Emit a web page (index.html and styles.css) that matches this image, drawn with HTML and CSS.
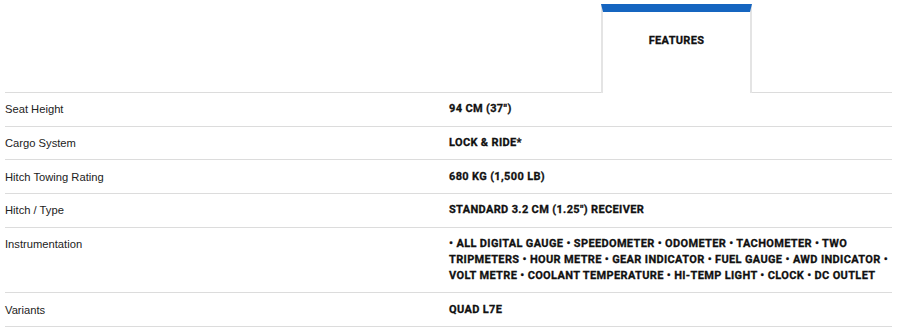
FILE: index.html
```html
<!DOCTYPE html>
<html lang="en">
<head>
    <meta charset="UTF-8">
    <title>Specifications</title>
    <link rel="stylesheet" href="styles.css">
</head>
<body>
    <div class="specs">
        <div class="specsHead">
            <div class="headSpace headLeft"></div>
            <div class="tab">FEATURES</div>
            <div class="headSpace"></div>
        </div>
        <div class="row">
            <div class="label">Seat Height</div>
            <div class="value">94 cm (37")</div>
        </div>
        <div class="row">
            <div class="label">Cargo System</div>
            <div class="value">Lock &amp; Ride*</div>
        </div>
        <div class="row">
            <div class="label">Hitch Towing Rating</div>
            <div class="value">680 kg (1,500 lb)</div>
        </div>
        <div class="row">
            <div class="label">Hitch / Type</div>
            <div class="value">Standard 3.2 cm (1.25") receiver</div>
        </div>
        <div class="row">
            <div class="label">Instrumentation</div>
            <div class="value">• All digital gauge • Speedometer • Odometer • Tachometer • Two tripmeters • Hour metre • Gear indicator • Fuel gauge • AWD indicator • Volt metre • Coolant temperature • Hi-temp light • Clock • DC outlet</div>
        </div>
        <div class="row">
            <div class="label">Variants</div>
            <div class="value">Quad L7E</div>
        </div>
    </div>
</body>
</html>
```

FILE: styles.css
```css
*{
    box-sizing: border-box;
}
body{
    margin: 0;
    background: #fff;
    font-family: "Liberation Sans", Arial, sans-serif;
}
.specs{
    margin: 0 8px 0 5px;
}
.specsHead{
    display: flex;
    height: 93px;
}
.headSpace{
    flex: 1;
    border-bottom: 1px solid #dcdcdc;
}
.headLeft{
    flex: 0 0 596px;
}
.tab{
    width: 151px;
    margin-top: 4px;
    border-top: 8px solid #1565c0;
    border-left: 2px solid #e4e4e4;
    border-right: 2px solid #e4e4e4;
    padding-top: 22px;
    text-align: center;
    font-family: Roboto, sans-serif;
    font-weight: 700;
    font-size: 11px;
    letter-spacing: 0.3px;
    -webkit-text-stroke: 0.3px #111;
    color: #111;
}
.row{
    display: grid;
    grid-template-columns: 444px 1fr;
    border-bottom: 1px solid #dcdcdc;
    padding: 8.35px 0;
    line-height: 16px;
}
.label{
    font-size: 11.2px;
    color: #222;
}
.value{
    font-family: Roboto, sans-serif;
    font-weight: 700;
    font-size: 11px;
    letter-spacing: 0.35px;
    -webkit-text-stroke: 0.3px #111;
    text-transform: uppercase;
    color: #111;
}
```
